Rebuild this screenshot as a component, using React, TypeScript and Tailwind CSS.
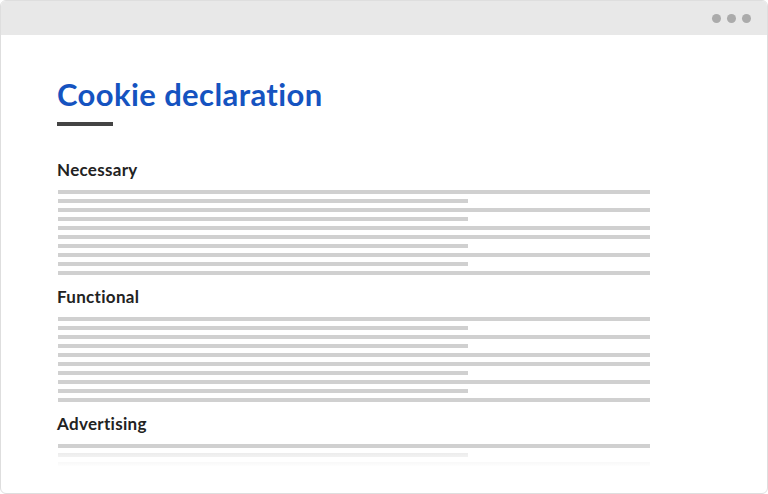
const pattern = [1, 0, 1, 0, 1, 1, 0, 1, 0, 1];

function Lines({ rows }: { rows: number[] }) {
  return (
    <div className="flex flex-col gap-[5px] pl-[1px]">
      {rows.map((long, i) => (
        <div
          key={i}
          className={`h-[4px] bg-[#d0d0d0] ${long ? "w-[592px]" : "w-[410px]"}`}
        />
      ))}
    </div>
  );
}

function Section({ title, children }: { title: string; children: React.ReactNode }) {
  return (
    <section className="flex flex-col gap-[10px]">
      <h2 className="text-[17px] leading-[20px] font-bold text-[#222222] tracking-[0.3px]">{title}</h2>
      {children}
    </section>
  );
}

export default function App() {
  return (
    <div
      className="w-[768px] h-[494px] bg-white overflow-hidden"
      style={{ fontFamily: "Lato, 'Open Sans', sans-serif" }}
    >
      <div className="w-full h-full flex flex-col border border-[#dedede] rounded-[6px] overflow-hidden">
        {/* browser chrome */}
        <div className="h-[34px] shrink-0 bg-[#e8e8e8] flex items-center justify-end gap-[6px] pr-[16px]">
          <span className="w-[9px] h-[9px] rounded-full bg-[#ababab]" />
          <span className="w-[9px] h-[9px] rounded-full bg-[#ababab]" />
          <span className="w-[9px] h-[9px] rounded-full bg-[#ababab]" />
        </div>

        <div className="flex flex-col pl-[56px] pt-[41px]">
          <h1 className="text-[31px] leading-[36px] font-bold text-[#1553c0] tracking-[0.4px]">
            Cookie declaration
          </h1>
          <div className="mt-[10px] w-[56px] h-[4px] bg-[#444444]" />

          <div className="mt-[34px] flex flex-col gap-[12px]">
            <Section title="Necessary">
              <Lines rows={pattern} />
            </Section>
            <Section title="Functional">
              <Lines rows={pattern} />
            </Section>
            <Section title="Advertising">
              <div className="relative">
                <Lines rows={[1, 0, 1]} />
                <div className="absolute inset-x-0 top-[5px] h-[18px] bg-gradient-to-b from-white/50 to-white" />
              </div>
            </Section>
          </div>
        </div>
      </div>
    </div>
  );
}
